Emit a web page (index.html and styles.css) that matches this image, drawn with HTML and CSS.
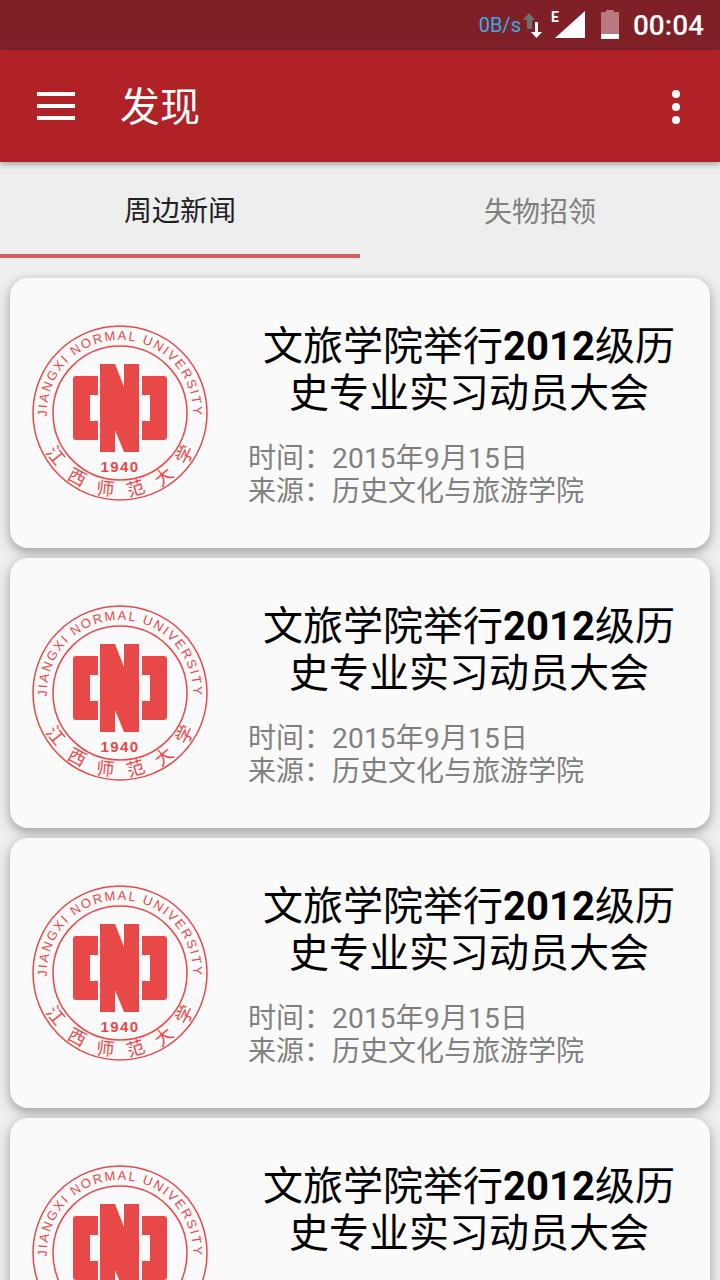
FILE: index.html
```html
<!DOCTYPE html>
<html lang="zh-CN">
<head>
  <meta charset="UTF-8">
  <meta name="viewport" content="width=device-width, initial-scale=1.0">
  <title>发现</title>
  <link rel="stylesheet" href="styles.css">
</head>
<body>
  <svg class="defs" width="0" height="0">
    <defs>
      <symbol id="seal" viewBox="0 0 200 200">
        <path id="arcTop" d="M29.5 118.9A73 73 0 1 1 170.5 118.9" fill="none"/>
        <path id="arcBottom" d="M19.8 121.5A83 83 0 0 0 180.2 121.5" fill="none"/>
        <circle cx="100" cy="100" r="87" fill="none" stroke="#e94848" stroke-width="1.5"/>
        <circle cx="100" cy="100" r="67" fill="none" stroke="#e94848" stroke-width="1.5"/>
        <path fill="#e94848" d="M56 63H78V82H70V108H78V127H56Q53 127 53 124V66Q53 63 56 63Z"/>
        <path fill="#e94848" d="M144 63H122V82H130V108H122V127H144Q147 127 147 124V66Q147 63 144 63Z"/>
        <path fill="#e94848" d="M80 51H95L104 74V51H119V139H104L95 117V139H80Z"/>
        <text class="seal-year" x="100" y="159" text-anchor="middle">1940</text>
        <text class="seal-en"><textPath href="#arcTop" startOffset="50%" text-anchor="middle">JIANGXI NORMAL UNIVERSITY</textPath></text>
        <text class="seal-cn"><textPath href="#arcBottom" startOffset="54%" text-anchor="middle">江西师范大学</textPath></text>
      </symbol>
    </defs>
  </svg>

  <div class="status-bar">
    <span class="net-speed">0B/s</span>
    <svg class="net-arrows" width="24" height="28" viewBox="0 0 24 28">
      <path fill="#6f6f6f" d="M7 2L13 9H10V18H5V9H1Z"/>
      <path fill="#fff" d="M13 11H16V21H20L14.5 27L9 21H13Z"/>
    </svg>
    <svg class="signal" width="34" height="30" viewBox="0 0 34 30">
      <path fill="#fff" d="M32 1V28H2Z"/>
    </svg>
    <span class="net-type">E</span>
    <svg class="battery" width="20" height="30" viewBox="0 0 20 30">
      <path fill="#b87a7e" d="M6 0H14V2H19V29H1V2H6Z"/>
      <rect fill="#fff" x="1" y="24" width="18" height="5"/>
    </svg>
    <span class="clock">00:04</span>
  </div>

  <header class="toolbar">
    <div class="menu-icon"><i></i><i></i><i></i></div>
    <h1 class="toolbar-title">发现</h1>
    <div class="more-icon"><i></i><i></i><i></i></div>
  </header>

  <nav class="tabs">
    <div class="tab active">周边新闻</div>
    <div class="tab">失物招领</div>
  </nav>

  <main class="news-list">
    <article class="news-card">
      <svg class="seal"><use href="#seal"/></svg>
      <div class="news-body">
        <h2 class="news-title">文旅学院举行<b>2012</b>级历史专业实习动员大会</h2>
        <p class="news-meta">时间：<span class="news-date">2015年9月15日</span><br>来源：历史文化与旅游学院</p>
      </div>
    </article>
    <article class="news-card">
      <svg class="seal"><use href="#seal"/></svg>
      <div class="news-body">
        <h2 class="news-title">文旅学院举行<b>2012</b>级历史专业实习动员大会</h2>
        <p class="news-meta">时间：<span class="news-date">2015年9月15日</span><br>来源：历史文化与旅游学院</p>
      </div>
    </article>
    <article class="news-card">
      <svg class="seal"><use href="#seal"/></svg>
      <div class="news-body">
        <h2 class="news-title">文旅学院举行<b>2012</b>级历史专业实习动员大会</h2>
        <p class="news-meta">时间：<span class="news-date">2015年9月15日</span><br>来源：历史文化与旅游学院</p>
      </div>
    </article>
    <article class="news-card">
      <svg class="seal"><use href="#seal"/></svg>
      <div class="news-body">
        <h2 class="news-title">文旅学院举行<b>2012</b>级历史专业实习动员大会</h2>
        <p class="news-meta">时间：<span class="news-date">2015年9月15日</span><br>来源：历史文化与旅游学院</p>
      </div>
    </article>
  </main>
</body>
</html>
```

FILE: styles.css
```css
html, body {
  height: 100%;
}

body {
  margin: 0;
  background: #eeeeee;
  font-family: Roboto, "Noto Sans CJK SC", sans-serif;
  overflow: hidden;
  height: 1280px;
}

.defs {
  position: absolute;
}

.status-bar {
  height: 50px;
  background: #7f2027;
  display: flex;
  align-items: center;
  justify-content: flex-end;
  padding-right: 16px;
  position: relative;
}

.net-speed {
  color: #35ade6;
  font-size: 20px;
  margin-right: 1px;
}

.net-arrows {
  margin-right: 7px;
}

.signal {
  margin-right: 13px;
}

.net-type {
  position: absolute;
  left: 551px;
  top: 9px;
  color: #fff;
  font-size: 14px;
  font-weight: 700;
  line-height: 16px;
}

.battery {
  margin-right: 13px;
}

.clock {
  color: #fff;
  font-size: 28px;
  font-weight: 500;
}

.toolbar {
  height: 112px;
  background: #b12226;
  display: flex;
  align-items: center;
  padding: 0 40px 0 37px;
  box-shadow: 0 2px 6px rgba(0, 0, 0, 0.35);
  position: relative;
  z-index: 2;
}

.menu-icon {
  width: 38px;
  display: flex;
  flex-direction: column;
  gap: 8px;
}

.menu-icon i {
  height: 4px;
  background: #fff;
}

.toolbar-title {
  margin: 4px 0 0 45px;
  flex: 1;
  color: #fff;
  font-size: 40px;
  font-weight: 400;
  line-height: 48px;
}

.more-icon {
  display: flex;
  flex-direction: column;
  gap: 5px;
  margin-top: 2px;
}

.more-icon i {
  width: 8px;
  height: 8px;
  border-radius: 50%;
  background: #fff;
}

.tabs {
  height: 96px;
  display: flex;
}

.tab {
  flex: 1;
  display: flex;
  align-items: center;
  justify-content: center;
  box-sizing: border-box;
  color: #808080;
  font-size: 28px;
}

.tab.active {
  color: #212121;
  border-bottom: 4px solid #d0605f;
  padding-top: 2px;
}

.news-list {
  padding: 20px 10px 0;
  display: flex;
  flex-direction: column;
  gap: 10px;
}

.news-card {
  height: 270px;
  flex: none;
  background: #fafafa;
  border-radius: 18px;
  box-shadow: 0 4px 12px rgba(0, 0, 0, 0.35);
  display: flex;
  box-sizing: border-box;
  padding: 35px 20px 0 10px;
}

.seal {
  width: 200px;
  height: 200px;
  flex: none;
}

.seal-en {
  font-family: "Liberation Sans", sans-serif;
  font-size: 13px;
  letter-spacing: 1.8px;
  fill: #e94848;
}

.seal-cn {
  font-family: "Noto Sans CJK SC", sans-serif;
  font-size: 18px;
  letter-spacing: 15px;
  fill: #e94848;
}

.seal-year {
  font-family: "Liberation Sans", sans-serif;
  font-size: 15px;
  font-weight: 700;
  letter-spacing: 1.4px;
  fill: #e94848;
}

.news-body {
  flex: 1;
  margin-left: 28px;
  margin-top: 10px;
}

.news-title {
  margin: 0;
  color: #000;
  font-size: 40px;
  font-weight: 400;
  line-height: 47px;
  text-align: center;
}

.news-title b {
  font-weight: 700;
}

.news-meta {
  margin: 25px 0 0;
  color: #808080;
  font-size: 28px;
  line-height: 33px;
}

.news-date {
  letter-spacing: 0.2px;
}
```
